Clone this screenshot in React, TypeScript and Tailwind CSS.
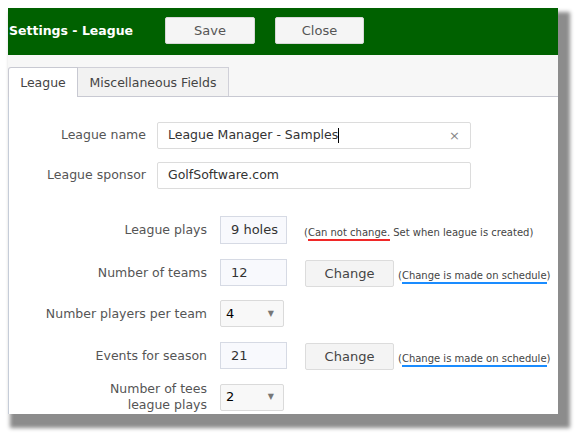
import React from 'react';

const font = { fontFamily: '"DejaVu Sans", Verdana, sans-serif' };

const Note: React.FC<{ children: React.ReactNode }> = ({ children }) => (
  <span className="text-[10px] text-[#444] whitespace-nowrap">{children}</span>
);

const ChangeButton: React.FC = () => (
  <button className="w-[89px] h-[27px] mt-[2px] ml-[18px] bg-[#f4f4f4] border border-[#dcdcdc] rounded-[2px] text-[13px] text-[#444]">
    Change
  </button>
);

const Select: React.FC<{ value: string }> = ({ value }) => (
  <div className="w-[64px] h-[27px] flex items-center justify-between pl-[5px] pr-[9px] bg-[#f8f8f8] border border-[#dadada] rounded-[2px] text-[13px] text-black">
    <span>{value}</span>
    <span className="text-[8px] text-[#777]">▼</span>
  </div>
);

const SmallInput: React.FC<{ value: string; tall?: boolean }> = ({ value, tall }) => (
  <div
    className={`w-[67px] ${tall ? 'h-[28px]' : 'h-[27px]'} flex items-center pl-[10px] bg-[#f8f9fd] border border-[#d6dae4] text-[13px] text-[#333]`}
  >
    {value}
  </div>
);

const Row: React.FC<{ label: React.ReactNode; children: React.ReactNode; className?: string }> = ({
  label,
  children,
  className = '',
}) => (
  <div className={`flex items-center ${className}`}>
    <div className="w-[198px] text-right text-[12.5px] leading-[16px] text-[#555]">{label}</div>
    <div className="ml-[13px] flex items-center">{children}</div>
  </div>
);

const App: React.FC = () => {
  return (
    <div className="w-[581px] h-[435px] bg-white p-2" style={font}>
      <div className="w-[550px] h-[406px] bg-white overflow-hidden flex flex-col shadow-[7px_9px_4px_5px_#8c8c8c]">
        {/* header */}
        <div className="h-[47px] shrink-0 bg-[#006100] flex items-center pl-px">
          <div className="w-[156px] text-[12.5px] font-bold text-white">Settings - League</div>
          <button className="w-[90px] h-[27px] -mt-[2px] bg-[#f5f5f5] border border-[#d8d8d8] rounded-[2px] text-[13px] text-[#555]">
            Save
          </button>
          <button className="w-[89px] h-[27px] -mt-[2px] ml-[20px] bg-[#f5f5f5] border border-[#d8d8d8] rounded-[2px] text-[13px] text-[#555]">
            Close
          </button>
        </div>

        {/* tabs */}
        <div className="h-[42px] shrink-0 bg-[#f7f7f7] border-b border-[#c8c9d2] flex items-end">
          <div className="w-[70px] h-[30px] -mb-px bg-white border border-b-0 border-[#c8c9d2] rounded-tl-[3px] flex items-center justify-center pt-[2px] text-[12.5px] text-[#444]">
            League
          </div>
          <div className="w-[151px] h-[29px] bg-[#f2f2f2] border border-l-0 border-b-0 border-[#d0d0d8] flex items-center justify-center pt-[2px] text-[12.5px] text-[#444]">
            Miscellaneous Fields
          </div>
        </div>

        {/* body */}
        <div className="flex-1 border-l border-[#c5ccd8] pt-[25px]">
          <div className="flex items-center">
            <div className="w-[137px] text-right text-[12.5px] text-[#555]">League name</div>
            <div className="ml-[11px] w-[314px] h-[27px] flex items-center pl-[10px] pr-[10px] bg-white border border-[#dcdcdc] rounded-[2px] text-[12.5px] text-[#333]">
              <span>League Manager - Samples</span>
              <span className="w-px h-[15px] bg-black" />
              <span className="ml-auto text-[13px] text-[#888]">×</span>
            </div>
          </div>
          <div className="flex items-center mt-[13px]">
            <div className="w-[137px] text-right text-[12.5px] text-[#555]">League sponsor</div>
            <div className="ml-[11px] w-[314px] h-[27px] flex items-center pl-[10px] bg-white border border-[#dcdcdc] rounded-[2px] text-[12.5px] text-[#333]">
              GolfSoftware.com
            </div>
          </div>

          <Row label="League plays" className="mt-[27px]">
            <SmallInput value="9 holes" tall />
            <div className="ml-[17px] mt-[2px]">
              <Note>
                (<span className="inline-block border-b-2 border-[#f02828] leading-[13px]">Can not change.</span> Set when
                league is created)
              </Note>
            </div>
          </Row>

          <Row label="Number of teams" className="mt-[14px]">
            <SmallInput value="12" />
            <ChangeButton />
            <div className="ml-[4px] mt-[2px]">
              <Note>
                (<span className="inline-block border-b-2 border-[#1a8cff] leading-[13px]">Change is made on schedule</span>)
              </Note>
            </div>
          </Row>

          <Row label="Number players per team" className="mt-[13px]">
            <Select value="4" />
          </Row>

          <Row label="Events for season" className="mt-[14px]">
            <SmallInput value="21" />
            <ChangeButton />
            <div className="ml-[4px] mt-[2px]">
              <Note>
                (<span className="inline-block border-b-2 border-[#1a8cff] leading-[13px]">Change is made on schedule</span>)
              </Note>
            </div>
          </Row>

          <Row
            label={
              <>
                Number of tees
                <br />
                league plays
              </>
            }
            className="mt-[11px]"
          >
            <Select value="2" />
          </Row>
        </div>
      </div>
    </div>
  );
};

export default App;
